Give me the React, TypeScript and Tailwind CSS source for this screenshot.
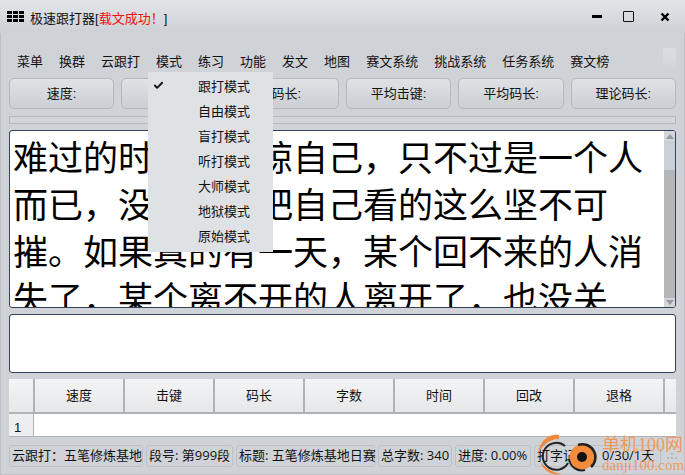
import React from "react";
import { Check } from "lucide-react";

const menus = ["菜单", "换群", "云跟打", "模式", "练习", "功能", "发文", "地图", "赛文系统", "挑战系统", "任务系统", "赛文榜"];
const stats = ["速度:", "击键:", "码长:", "平均击键:", "平均码长:", "理论码长:"];
const modes = ["跟打模式", "自由模式", "盲打模式", "听打模式", "大师模式", "地狱模式", "原始模式"];
const columns = ["速度", "击键", "码长", "字数", "时间", "回改", "退格"];
const statusItems = [
    { text: "云跟打\uFF1A五笔修炼基地", width: "w-[134px]" },
    { text: "段号: 第999段", width: "w-[87px]" },
    { text: "标题: 五笔修炼基地日赛", width: "w-[139px]" },
    { text: "总字数: 340", width: "w-[74px]" },
    { text: "进度: 0.00%", width: "w-[76px]" },
    { text: "打字记录\uFF1A0/30/1天", width: "w-[127px]" },
];
const article =
    "难过的时候\uFF0C原谅自己\uFF0C只不过是一个人而已\uFF0C没有必要把自己看的这么坚不可摧。如果真的有一天\uFF0C某个回不来的人消失了\uFF0C某个离不开的人离开了\uFF0C也没关系\uFF0C时间会慢慢治愈一切。";

const App: React.FC = () => {
    return (
        <div className="relative w-[685px] h-[475px] overflow-hidden flex flex-col bg-[#cfd3d8] text-[13px] text-[#111] font-['Liberation_Sans','Noto_Sans_CJK_SC',sans-serif]">
            {/* title bar */}
            <div className="h-[33px] shrink-0 flex items-center pl-[7px] bg-gradient-to-b from-[#e2e5e8] to-[#cdd1d6]">
                <div className="grid grid-cols-3 gap-x-[1px] gap-y-[1px] w-[17px] mr-[6px]">
                    {[0, 1, 2, 3, 4, 5, 6, 7, 8].map((i) => (
                        <span key={i} className="h-[3px] bg-black" />
                    ))}
                </div>
                <span className="text-[13px] leading-none pt-[3px]">
                    极速跟打器[<span className="text-[#f01010]">载文成功{"\uFF01"}</span>]
                </span>
                <div className="ml-auto flex items-center">
                    <span className="w-[10px] h-[3px] bg-black mr-[21px]" />
                    <span className="w-[11px] h-[11px] border border-[#111] rounded-[1px] mr-[26px]" />
                    <svg viewBox="0 0 10 10" className="w-[10px] h-[10px] mr-[15px]">
                        <path d="M1.5 1.5 L8.5 8.5 M8.5 1.5 L1.5 8.5" stroke="#000" strokeWidth="2.4" />
                    </svg>
                </div>
            </div>

            {/* window body */}
            <div className="flex-1 flex flex-col pl-[8px] pr-[8px] border-l border-r border-b border-[#bcc0c5]">
                {/* menu row */}
                <div className="relative h-[45px] flex items-end pb-[7px] pl-[8px] shrink-0">
                    {menus.map((m) => (
                        <span key={m} className="mr-[16px] leading-[18px]">
                            {m}
                        </span>
                    ))}
                    <span className="absolute right-0 top-[15px] w-[13px] h-[22px] rounded-t-[3px] bg-gradient-to-b from-[#dde0e3] to-[#cfd3d8]" />
                </div>

                {/* stat buttons */}
                <div className="grid grid-cols-6 gap-x-[7px] h-[31px] shrink-0">
                    {stats.map((s) => (
                        <div
                            key={s}
                            className="flex items-center justify-center rounded-[5px] border border-[#b5b8bc] bg-gradient-to-b from-[#dfe2e5] to-[#cbcfd4]"
                        >
                            {s}
                        </div>
                    ))}
                </div>

                {/* progress bar */}
                <div className="h-[8px] mt-[7px] shrink-0 border border-[#b5b8bc] bg-[#d2d5d9]" />

                {/* article */}
                <div className="relative h-[178px] mt-[6px] shrink-0 flex bg-white border border-[#33415a] rounded-[3px] overflow-hidden">
                    <div className="flex-1 pl-[3px] pt-[1px] text-[35px] leading-[47px] text-black overflow-hidden font-['Noto_Sans_CJK_SC',sans-serif]">{article}</div>
                    <div className="w-[11px] shrink-0 flex flex-col items-center bg-[#b4b6b8]">
                        <div className="w-full h-[10px] flex items-center justify-center bg-[#d3d7db]">
                            <span className="w-0 h-0 border-l-[4px] border-r-[4px] border-b-[5px] border-l-transparent border-r-transparent border-b-[#9a9a9a]" />
                        </div>
                        <div className="w-full h-[29px] bg-[#c8d0d8]" />
                        <div className="flex-1" />
                        <div className="w-full h-[9px] flex items-center justify-center bg-[#d3d7db]">
                            <span className="w-0 h-0 border-l-[4px] border-r-[4px] border-t-[5px] border-l-transparent border-r-transparent border-t-[#9a9a9a]" />
                        </div>
                    </div>
                </div>

                {/* input */}
                <div className="h-[59px] mt-[6px] shrink-0 bg-white border border-[#33415a] rounded-[3px]" />

                {/* table */}
                <div className="h-[58px] mt-[6px] shrink-0 flex flex-col bg-white border-b border-[#b0b2b4] overflow-hidden">
                    <div className="h-[35px] shrink-0 flex border-b-2 border-[#b0b2b4] bg-gradient-to-b from-[#f3f4f5] to-[#e6e7e9]">
                        <div className="w-[26px] shrink-0 border-r-2 border-[#b0b2b4]" />
                        {columns.map((c) => (
                            <div key={c} className="w-[90px] shrink-0 flex items-center justify-center border-r-2 border-[#b0b2b4]">
                                {c}
                            </div>
                        ))}
                    </div>
                    <div className="flex-1 flex">
                        <div className="w-[25px] flex items-end pl-[5px] text-[13px] leading-[17px] bg-[#eceef0] border-r border-[#b0b2b4]">1</div>
                    </div>
                </div>

                {/* status bar */}
                <div className="mt-[8px] flex gap-[3px] h-[22px] shrink-0 font-['Open_Sans','Noto_Sans_CJK_SC',sans-serif]">
                    {statusItems.map((s) => (
                        <div
                            key={s.text}
                            className={`${s.width} shrink-0 flex items-center pl-[2px] pb-[2px] whitespace-nowrap rounded-[3px] border border-[#bdc0c4] leading-none`}
                        >
                            {s.text}
                        </div>
                    ))}
                </div>
            </div>

            {/* mode menu */}
            <div className="absolute left-[148px] top-[72px] w-[125px] h-[180px] py-[2px] bg-[#dfe2e5]">
                {modes.map((m, i) => (
                    <div key={m} className="relative h-[25px] flex items-center pl-[50px] text-[13px]">
                        {i === 0 && <Check className="absolute left-[5px] top-[6px] w-[11px] h-[11px]" strokeWidth={4} color="#111" />}
                        {m}
                    </div>
                ))}
            </div>

            {/* resize grip */}
            <svg viewBox="0 0 12 12" className="absolute left-[666px] top-[452px] w-[12px] h-[12px]">
                <path d="M5 1h2v2H5zM5 5h2v2H5zM1 5h2v2H1zM9 5h2v2H9z" fill="#b5b8bc" />
            </svg>

            {/* watermark */}
            <svg viewBox="0 0 70 50" className="absolute left-[535px] top-[432px] w-[70px] h-[50px]">
                <path d="M24 3 C12 1 3 12 3 24 C5 15 13 7 24 7 Z" fill="#f0883e" />
                <path d="M5 29 C8 38 16 44 27 42 C18 41 10 36 5 29 Z" fill="#f0883e" />
                <path d="M30 14 A13.5 13.5 0 1 0 33 31" fill="none" stroke="#222" strokeWidth="2" />
                <circle cx="47" cy="25" r="12.5" fill="#f28c3c" />
                <path d="M43 13 A13 13 0 0 1 56 35" fill="none" stroke="#222" strokeWidth="2.5" />
                <path d="M50 38 A13 13 0 0 1 34 27" fill="none" stroke="#222" strokeWidth="2" />
                <circle cx="47" cy="25" r="5" fill="#111" />
            </svg>
            <div className="absolute left-[602px] top-[434px] flex flex-col items-start text-[#ef9a5d] whitespace-nowrap">
                <span className="text-[18px] leading-[22px] font-['Liberation_Serif','Noto_Sans_CJK_SC',serif]">单机100网</span>
                <span className="text-[15px] leading-[18px] font-['Liberation_Serif',serif]">danji100.com</span>
            </div>
        </div>
    );
};

export default App;
